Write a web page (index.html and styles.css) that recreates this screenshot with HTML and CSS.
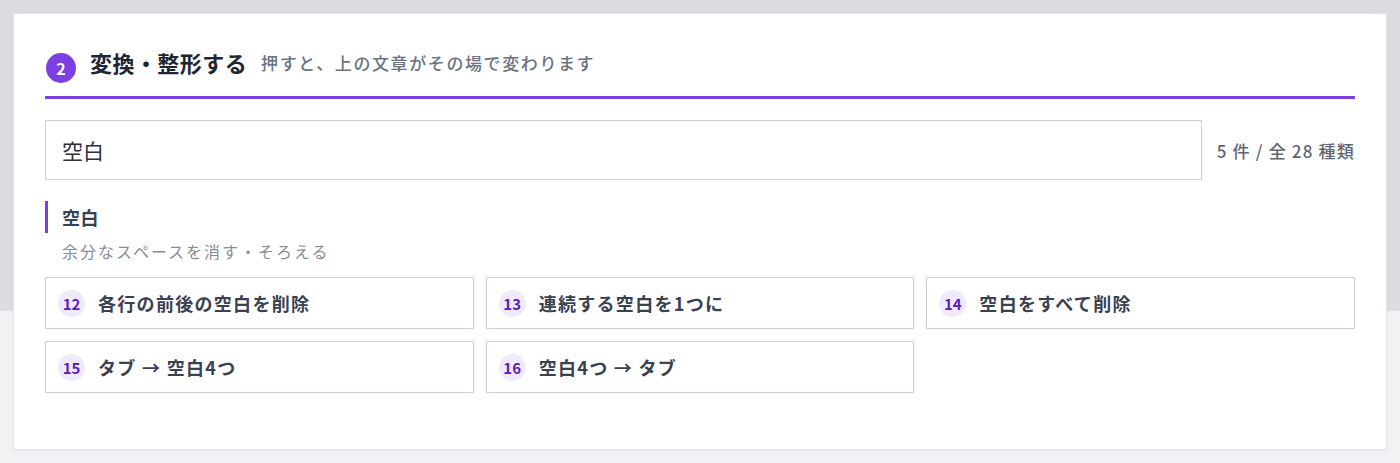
FILE: index.html
```html
<!DOCTYPE html>
<html lang="ja">
<head>
<meta charset="utf-8">
<title>変換・整形する</title>
<link rel="stylesheet" href="styles.css">
</head>
<body>
<div class="page">
  <section class="card">
    <header class="card-head">
      <span class="step">2</span>
      <h2 class="title">変換・整形する</h2>
      <span class="subtitle">押すと、上の文章がその場で変わります</span>
    </header>
    <div class="search-row">
      <input class="search" type="text" value="空白">
      <span class="count">5 件 / 全 28 種類</span>
    </div>
    <div class="group">
      <h3 class="group-title">空白</h3>
      <p class="group-desc">余分なスペースを消す・そろえる</p>
    </div>
    <div class="grid">
      <button class="item"><span class="num">12</span><span class="label">各行の前後の空白を削除</span></button>
      <button class="item"><span class="num">13</span><span class="label">連続する空白を1つに</span></button>
      <button class="item"><span class="num">14</span><span class="label">空白をすべて削除</span></button>
      <button class="item"><span class="num">15</span><span class="label">タブ → 空白4つ</span></button>
      <button class="item"><span class="num">16</span><span class="label">空白4つ → タブ</span></button>
    </div>
  </section>
</div>
</body>
</html>
```
FILE: styles.css
```css
* { box-sizing: border-box; }
html, body { margin: 0; padding: 0; }
body {
  font-family: "Noto Sans CJK JP", "Noto Sans", sans-serif;
  background: linear-gradient(to bottom, #dcdde0 0, #dcdde0 311px, #f3f3f5 311px, #f3f3f5 100%);
  height: 463px;
  overflow: hidden;
}
.page {
  padding: 13px;
}
.card {
  background: #fff;
  border: 1px solid #e3e3ea;
  box-shadow: 0 2px 6px rgba(0,0,0,0.04);
  padding: 31px 31px 55px;
  height: 437px;
}
.card-head {
  display: flex;
  align-items: center;
  height: 54px;
  padding-bottom: 18px;
  border-bottom: 3px solid #7b3fe4;
}
.step {
  width: 30px;
  height: 30px;
  border-radius: 50%;
  background: #7b3fe4;
  color: #fff;
  font-size: 16px;
  font-weight: 700;
  display: flex;
  align-items: center;
  justify-content: center;
  margin: 12px 0 0 1px;
  flex: none;
}
.title {
  margin: 0 0 0 14px;
  font-size: 22px;
  font-weight: 700;
  color: #1e2533;
  letter-spacing: 0.02em;
}
.subtitle {
  margin-left: 14px;
  font-size: 17px;
  font-weight: 500;
  color: #6b7280;
  letter-spacing: 1.6px;
  padding-top: 2px;
}
.search-row {
  display: flex;
  align-items: center;
  margin-top: 21px;
  gap: 15px;
}
.search {
  flex: 1;
  height: 60px;
  border: 1px solid #cfd0dc;
  border-radius: 0;
  padding: 0 16px;
  font-family: "Noto Sans CJK JP", sans-serif;
  font-size: 21px;
  color: #2b2f38;
  outline: none;
}
.count {
  font-size: 17px;
  font-weight: 500;
  color: #5f6573;
  letter-spacing: 0.07em;
  white-space: nowrap;
}
.group {
  margin-top: 21px;
}
.group-title {
  margin: 0;
  height: 32px;
  display: flex;
  align-items: center;
  border-left: 3px solid #7b3fe4;
  padding-left: 14px;
  font-size: 18px;
  font-weight: 700;
  color: #374151;
  letter-spacing: 0.5px;
}
.group-desc {
  margin: 4px 0 0 17px;
  font-size: 16px;
  color: #888c94;
  letter-spacing: 2px;
  line-height: 28px;
}
.grid {
  margin-top: 12px;
  display: grid;
  grid-template-columns: repeat(3, 1fr);
  gap: 12px;
}
.item {
  display: flex;
  align-items: center;
  height: 52px;
  background: #fff;
  border: 1px solid #cdd0dc;
  border-radius: 0;
  padding: 0 12px;
  font-family: "Noto Sans CJK JP", sans-serif;
  text-align: left;
  cursor: pointer;
}
.num {
  width: 27px;
  height: 27px;
  border-radius: 50%;
  background: #f1eafd;
  color: #5b21b6;
  font-size: 15px;
  font-weight: 700;
  display: flex;
  align-items: center;
  justify-content: center;
  flex: none;
}
.label {
  margin-left: 13px;
  font-size: 18px;
  font-weight: 700;
  color: #3a4150;
  letter-spacing: 1.3px;
}
```
